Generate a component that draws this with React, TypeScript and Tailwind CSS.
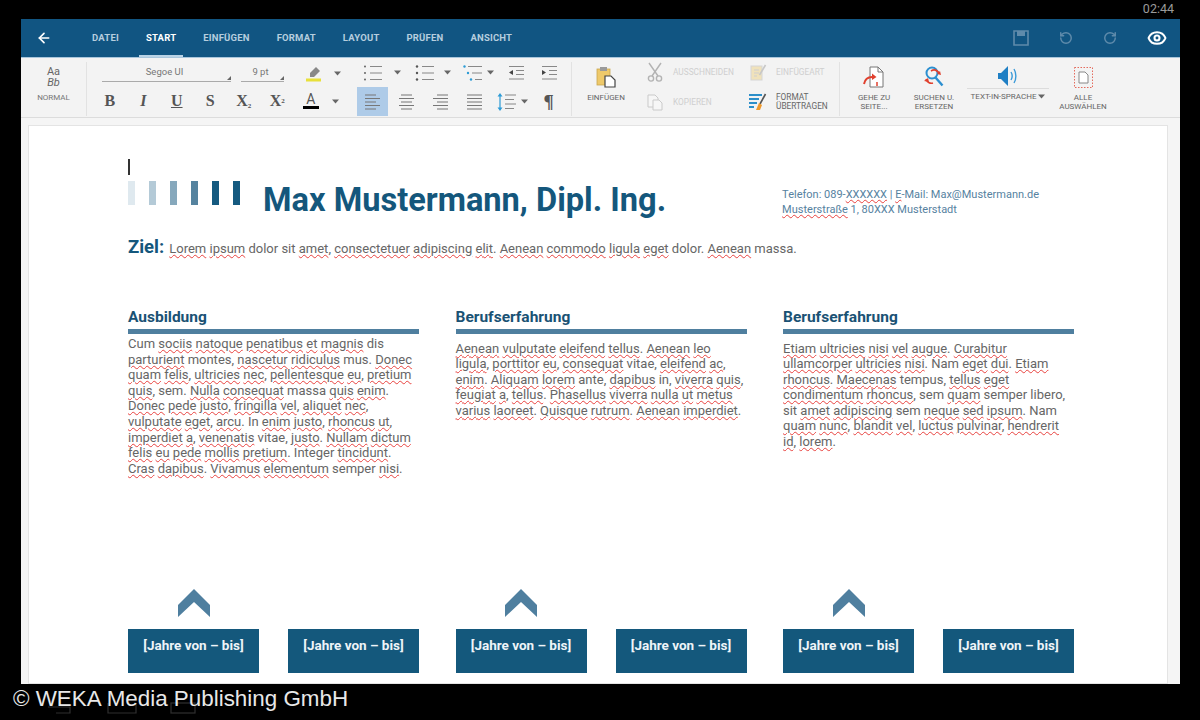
import { ArrowLeft, Eye, RotateCcw, RotateCw } from "lucide-react";
import type { ReactNode } from "react";

// words in {braces} get the red squiggle
function Spell({ text }: { text: string }) {
  const parts = text.split(/(\{[^}]+\})/);
  return (
    <>
      {parts.map((p, i) =>
        p.startsWith("{") ? (
          <span key={i} className="underline decoration-[#e8423f] decoration-wavy decoration-1 underline-offset-[1px]">
            {p.slice(1, -1)}
          </span>
        ) : (
          <span key={i}>{p}</span>
        ),
      )}
    </>
  );
}

function Caret() {
  return (
    <svg width="7" height="5" viewBox="0 0 7 5" className="shrink-0">
      <path d="M0 0.5h7L3.5 4.5z" fill="#666" />
    </svg>
  );
}

function Corner() {
  return (
    <svg width="4" height="4" viewBox="0 0 4 4" className="shrink-0">
      <path d="M4 0v4H0z" fill="#666" />
    </svg>
  );
}

function ListIcon({ kind }: { kind: "num" | "bullet" | "multi" }) {
  const c = kind === "multi" ? "#2d9bd6" : "#555";
  return (
    <svg width="20" height="18" viewBox="0 0 20 18">
      <circle cx={kind === "multi" ? 1.5 : 2} cy="2.5" r={kind === "num" ? 0.9 : 1.2} fill={c} />
      <circle cx={kind === "multi" ? 5 : 2} cy="9" r={kind === "num" ? 0.9 : 1.2} fill={c} />
      <circle cx={kind === "multi" ? 8 : 2} cy="15.5" r={kind === "num" ? 0.9 : 1.2} fill={c} />
      <path d={kind === "multi" ? "M5 2.5h14M9 9h10M12 15.5h7" : "M7 2.5h12M7 9h12M7 15.5h12"} stroke="#888" strokeWidth="1.2" />
    </svg>
  );
}

function LineSpacingIcon() {
  return (
    <svg width="20" height="18" viewBox="0 0 20 18">
      <path d="M3 0l2.5 3.5h-5zM3 18l2.5-3.5h-5z" fill="#2d9bd6" />
      <path d="M3 3v12" stroke="#2d9bd6" strokeWidth="1.2" />
      <path d="M8 2h11M8 6.5h9M8 11h11M8 15.5h9" stroke="#888" strokeWidth="1.2" />
    </svg>
  );
}

function IndentIcon({ right }: { right?: boolean }) {
  return (
    <svg width="17" height="16" viewBox="0 0 17 16">
      <path d="M1 1.5h15M8 5.5h8M8 9.5h8M1 14h15" stroke="#888" strokeWidth="1.2" />
      <path d={right ? "M1 5l4 2.5L1 10z" : "M5 5L1 7.5 5 10z"} fill="#444" />
    </svg>
  );
}

function AlignIcon({ kind }: { kind: "left" | "center" | "right" | "justify" }) {
  const d = {
    left: "M0 1h11M0 4.5h15M0 8h11M0 11.5h15M0 15h11",
    center: "M2 1h11M0 4.5h15M2 8h11M0 11.5h15M2 15h11",
    right: "M4 1h11M0 4.5h15M4 8h11M0 11.5h15M4 15h11",
    justify: "M0 1h15M0 4.5h15M0 8h15M0 11.5h15M0 15h15",
  }[kind];
  return (
    <svg width="15" height="16" viewBox="0 0 15 16">
      <path d={d} stroke="#777" strokeWidth="1.2" />
    </svg>
  );
}

function FormatLetter({ children, className }: { children: ReactNode; className?: string }) {
  return (
    <span className={`flex w-[33.5px] shrink-0 justify-center text-[16px] leading-none font-bold text-[#555] [font-family:'Liberation_Serif',serif] ${className ?? ""}`}>
      <span>{children}</span>
    </span>
  );
}

function ClipboardIcon() {
  return (
    <svg width="20" height="22" viewBox="0 0 20 22">
      <rect x="1" y="3" width="13" height="16" fill="#eec96a" stroke="#c8a64f" strokeWidth="0.8" />
      <rect x="4" y="1" width="7" height="4" fill="#9a9a9a" />
      <path d="M9 10h6l4 4v7H9z" fill="#fff" stroke="#444" strokeWidth="1.2" />
    </svg>
  );
}

function ScissorsIcon() {
  return (
    <svg width="16" height="20" viewBox="0 0 16 20" className="opacity-40">
      <path d="M2 1l9 13M14 1L5 14" stroke="#555" strokeWidth="1.4" fill="none" />
      <circle cx="4" cy="16.5" r="2.6" stroke="#555" strokeWidth="1.4" fill="none" />
      <circle cx="12" cy="16.5" r="2.6" stroke="#555" strokeWidth="1.4" fill="none" />
    </svg>
  );
}

function CopyIcon() {
  return (
    <svg width="16" height="17" viewBox="0 0 16 17" className="opacity-25">
      <path d="M1 1h7l3 3v9H1z" fill="#fff" stroke="#555" />
      <path d="M6 6h6l3 3v7H6z" fill="#fff" stroke="#555" />
    </svg>
  );
}

function PasteSpecialIcon() {
  return (
    <svg width="17" height="18" viewBox="0 0 17 18" className="opacity-40">
      <rect x="1" y="3" width="11" height="14" fill="#eec96a" stroke="#aaa" />
      <path d="M4 7h5M4 10h5M4 13h3" stroke="#999" />
      <path d="M15.5 2l-6 10" stroke="#888" strokeWidth="1.6" />
    </svg>
  );
}

function BrushIcon() {
  return (
    <svg width="18" height="18" viewBox="0 0 18 18">
      <path d="M0 2h13M0 6h10M0 10h8M0 14h5" stroke="#2d8fc9" strokeWidth="2" />
      <path d="M16.5 1L11 11" stroke="#555" strokeWidth="1.6" />
      <path d="M10 10l3 2-2 5-4 0z" fill="#ef9a2e" />
    </svg>
  );
}

function GotoIcon() {
  return (
    <svg width="22" height="22" viewBox="0 0 22 22">
      <path d="M7 1h8l5 5v15H7z" fill="#fff" stroke="#777" strokeWidth="1" />
      <path d="M15 1v5h5" fill="none" stroke="#777" />
      <path d="M1 18c1-5 4-7 8-7" stroke="#e0402e" strokeWidth="2" fill="none" />
      <path d="M9 7.5l4.5 3.5L9 14z" fill="#e0402e" />
      <path d="M14 16v4" stroke="#e0402e" strokeWidth="1.5" />
    </svg>
  );
}

function FindIcon() {
  return (
    <svg width="20" height="22" viewBox="0 0 20 22">
      <circle cx="8" cy="7" r="5.5" stroke="#2b8fd0" strokeWidth="2" fill="none" />
      <path d="M11.5 11.5l7 8" stroke="#2b8fd0" strokeWidth="2.4" />
      <path d="M7 5c3-2 6-1 8 2" stroke="#e0402e" strokeWidth="1.6" fill="none" />
      <path d="M17 9l-4-1 3-3z" fill="#e0402e" />
      <path d="M2 13c1 3 4 5 7 4" stroke="#e0402e" strokeWidth="1.6" fill="none" />
      <path d="M0 15l4-3 1 4z" fill="#e0402e" />
    </svg>
  );
}

function SpeakerIcon() {
  return (
    <svg width="22" height="22" viewBox="0 0 22 22">
      <path d="M1 8h3l7-7v20l-7-7H1z" fill="#1f7fc4" />
      <path d="M14 7c1.5 2.5 1.5 5.5 0 8M17 4c2.5 4 2.5 10 0 14" stroke="#3a9ad8" strokeWidth="1.4" fill="none" />
    </svg>
  );
}

function SelectAllIcon() {
  return (
    <svg width="19" height="21" viewBox="0 0 19 21">
      <rect x="0.5" y="0.5" width="18" height="20" fill="none" stroke="#e25b4c" strokeWidth="0.9" strokeDasharray="1.5 1.5" />
      <path d="M5 5h6l3 3v8H5z" fill="#fff" stroke="#888" />
    </svg>
  );
}

function Tab({ label, active }: { label: string; active?: boolean }) {
  return (
    <div className={`flex h-[38px] items-center border-b-2 px-[7px] pt-[3px] text-[9.5px] font-bold tracking-[0.2px] ${active ? "border-[#b9d3e6] text-white" : "border-transparent text-[#b6cedf]"}`}>
      {label}
    </div>
  );
}

function BigButton({ icon, lines, width }: { icon: ReactNode; lines: string[]; width: string }) {
  return (
    <div className={`flex flex-col items-center ${width}`}>
      <div className="flex h-[28px] items-center">{icon}</div>
      <div className="mt-[2px] text-center text-[8px] leading-[9px] text-[#666]">
        {lines.map((l) => (
          <div key={l}>{l}</div>
        ))}
      </div>
    </div>
  );
}

function SmallAction({ icon, lines, faded }: { icon: ReactNode; lines: string[]; faded?: boolean }) {
  return (
    <div className="flex h-[22px] items-center gap-[9px]">
      <div className="flex w-[18px] justify-center">{icon}</div>
      <div className={`text-[8.3px] leading-[9px] ${faded ? "text-[#cfcfcf]" : "text-[#666]"}`}>
        {lines.map((l) => (
          <div key={l}>{l}</div>
        ))}
      </div>
    </div>
  );
}

function Divider() {
  return <div className="h-[54px] w-px shrink-0 bg-[#e2e2e2]" />;
}

function Ribbon() {
  return (
    <div className="flex h-[60px] shrink-0 items-start border-b border-[#dcdcdc] bg-[#f3f3f3] pt-[4px]">
      <div className="flex w-[65px] shrink-0 flex-col items-center pt-[4px] text-[#666]">
        <div className="text-[11px] leading-[11px]">Aa</div>
        <div className="text-[11px] leading-[11px] italic">Bb</div>
        <div className="mt-[5px] text-[8px] leading-[10px] text-[#777]">NORMAL</div>
      </div>
      <Divider />
      <div className="flex w-[270px] shrink-0 flex-col gap-[10px] pl-[6px] pt-[2px]">
        <div className="flex h-[19px] items-center">
          <div className="ml-[9px] flex w-[129px] items-end border-b border-[#aaa] pb-[1px] text-[9.5px] text-[#777]">
            <span className="flex-1 text-center">Segoe UI</span>
            <Corner />
          </div>
          <div className="ml-[10px] flex w-[43px] items-end border-b border-[#aaa] pb-[1px] text-[9.5px] text-[#777]">
            <span className="flex-1 text-center">9 pt</span>
            <Corner />
          </div>
          <svg width="16" height="16" viewBox="0 0 16 16" className="ml-[21px]">
            <path d="M11 1l4 4-6 6H5V7z" fill="#888" />
            <rect x="1" y="12.5" width="15" height="3" fill="#e8e03a" />
          </svg>
          <div className="ml-[13px]">
            <Caret />
          </div>
        </div>
        <div className="flex items-center">
          <FormatLetter>B</FormatLetter>
          <FormatLetter className="italic">I</FormatLetter>
          <FormatLetter className="underline">U</FormatLetter>
          <FormatLetter>S</FormatLetter>
          <FormatLetter>
            X<sub className="text-[7px]">2</sub>
          </FormatLetter>
          <FormatLetter>
            X<sup className="text-[7px]">2</sup>
          </FormatLetter>
          <div className="flex w-[33.5px] shrink-0 flex-col items-center">
            <span className="text-[14px] leading-[13px] text-[#555]">A</span>
            <span className="h-[3px] w-[16px] bg-black" />
          </div>
          <div className="ml-[4px]">
            <Caret />
          </div>
        </div>
      </div>
      <div className="flex w-[214px] shrink-0 flex-col gap-[4px]">
        <div className="flex h-[21px] items-center">
          <div className="ml-[6px]"><ListIcon kind="num" /></div>
          <div className="ml-[10.5px]"><Caret /></div>
          <div className="ml-[14.5px]"><ListIcon kind="bullet" /></div>
          <div className="ml-[8.5px]"><Caret /></div>
          <div className="ml-[12.5px]"><ListIcon kind="multi" /></div>
          <div className="ml-[3.5px]"><Caret /></div>
          <div className="ml-[14.5px]"><IndentIcon /></div>
          <div className="ml-[16px]"><IndentIcon right /></div>
        </div>
        <div className="flex h-[29px] items-center">
          <div className="flex h-[29px] w-[31px] items-center justify-center bg-[#aecbe8]"><AlignIcon kind="left" /></div>
          <div className="ml-[11px]"><AlignIcon kind="center" /></div>
          <div className="ml-[18.5px]"><AlignIcon kind="right" /></div>
          <div className="ml-[19px]"><AlignIcon kind="justify" /></div>
          <div className="ml-[15.5px]"><LineSpacingIcon /></div>
          <div className="ml-[3.5px]"><Caret /></div>
          <span className="ml-[16px] text-[19px] leading-none font-bold text-[#555] [font-family:'Liberation_Serif',serif]">¶</span>
        </div>
      </div>
      <Divider />
      <div className="mt-[1px] flex w-[267px] shrink-0">
        <BigButton icon={<ClipboardIcon />} lines={["EINFÜGEN"]} width="w-[68px]" />
        <div className="-mt-[2px] ml-[6px] flex w-[103px] flex-col gap-[8px]">
          <SmallAction icon={<ScissorsIcon />} lines={["AUSSCHNEIDEN"]} faded />
          <SmallAction icon={<CopyIcon />} lines={["KOPIEREN"]} faded />
        </div>
        <div className="-mt-[2px] flex flex-col gap-[8px]">
          <SmallAction icon={<PasteSpecialIcon />} lines={["EINFÜGEART"]} faded />
          <SmallAction icon={<BrushIcon />} lines={["FORMAT", "ÜBERTRAGEN"]} />
        </div>
      </div>
      <Divider />
      <div className="mt-[1px] flex pl-[4px]">
        <BigButton icon={<GotoIcon />} lines={["GEHE ZU", "SEITE..."]} width="w-[60px]" />
        <BigButton icon={<FindIcon />} lines={["SUCHEN U.", "ERSETZEN"]} width="w-[60px]" />
        <div className="ml-[3px] flex w-[82px] flex-col items-center">
          <div className="flex h-[26px] w-full items-center justify-center border-b border-[#dcdcdc]"><SpeakerIcon /></div>
          <div className="mt-[3px] flex items-center gap-[2px] text-[8px] leading-[9px] whitespace-nowrap text-[#666]">
            TEXT-IN-SPRACHE <Caret />
          </div>
        </div>
        <BigButton icon={<SelectAllIcon />} lines={["ALLE", "AUSWÄHLEN"]} width="ml-[4px] w-[60px]" />
      </div>
    </div>
  );
}

function Column({ title, body, bodyClass }: { title: string; body: string; bodyClass: string }) {
  return (
    <div className="w-[291px]">
      <h2 className="text-[15.5px] leading-[20px] font-bold text-[#1a5274]">{title}</h2>
      <div className="mt-[2px] h-[5px] w-full bg-[#4f7f9f]" />
      <p className={`text-[13px] text-[#666] ${bodyClass}`}>
        <Spell text={body} />
      </p>
    </div>
  );
}

function YearBox() {
  return (
    <div className="h-[44px] w-[131px] bg-[#14587c] pt-[6px] text-center text-[13.5px] font-bold text-[#eef4f8]">
      [Jahre von – bis]
    </div>
  );
}

function Timeline() {
  return (
    <div className="w-[291px]">
      <div className="flex justify-center pr-[160px]">
        <svg width="32" height="30" viewBox="0 0 32 30">
          <path d="M16 1L32 17v12L16 14 0 29V17z" fill="#4f7f9f" />
        </svg>
      </div>
      <div className="mt-[11px] flex justify-between">
        <YearBox />
        <YearBox />
      </div>
    </div>
  );
}

const barColors = ["bg-[#dfe9ef]", "bg-[#b4cad7]", "bg-[#86a8bc]", "bg-[#55839f]", "bg-[#155a80]", "bg-[#155a80]"];

export default function App() {
  return (
    <div className="flex h-[720px] w-[1200px] flex-col overflow-hidden bg-black [font-family:Roboto,sans-serif]">
      <div className="flex h-[19px] shrink-0 items-center justify-end pr-[26px] text-[12.5px] text-[#9a9a9a]">02:44</div>
      <div className="ml-[21px] flex h-[665px] w-[1159px] flex-col overflow-hidden bg-[#f5f5f5]">
        <div className="flex h-[39px] shrink-0 items-center border-b border-[#a9c6dc] bg-[#115582]">
          <ArrowLeft size={16} strokeWidth={2.5} className="ml-[15px] text-white" />
          <div className="ml-[33px] flex items-center gap-[13px]">
            <Tab label="DATEI" />
            <Tab label="START" active />
            <Tab label="EINFÜGEN" />
            <Tab label="FORMAT" />
            <Tab label="LAYOUT" />
            <Tab label="PRÜFEN" />
            <Tab label="ANSICHT" />
          </div>
          <div className="ml-auto flex items-center gap-[30px] pr-[13px]">
            <svg width="16" height="16" viewBox="0 0 16 16">
              <path d="M1 1h14v14H1z" fill="none" stroke="#5f8bab" strokeWidth="1.6" />
              <path d="M4 1h8v5H4z" fill="#5f8bab" />
            </svg>
            <RotateCcw size={14} strokeWidth={2.5} className="text-[#5f8bab]" />
            <RotateCw size={14} strokeWidth={2.5} className="text-[#5f8bab]" />
            <Eye size={20} strokeWidth={2.5} className="text-white" />
          </div>
        </div>
        <Ribbon />
        <div className="mt-[7px] mr-[12px] ml-[7px] flex-1 overflow-hidden border border-[#e4e4e4] bg-white pt-[33px] pl-[99px]">
          <div className="h-[16px] w-[2px] bg-[#333]" />
          <div className="flex items-start">
            <div className="mt-[6px] flex gap-[14px]">
              {barColors.map((b, i) => (
                <div key={i} className={`h-[24px] w-[7px] ${b}`} />
              ))}
            </div>
            <h1 className="mt-[6px] ml-[23px] text-[32.6px] leading-[38px] font-bold whitespace-nowrap text-[#14577c]">Max Mustermann, Dipl. Ing.</h1>
            <div className="mt-[12px] ml-[116px] text-[11px] leading-[15px] whitespace-nowrap text-[#56829f]">
              <div>
                <Spell text="Telefon: 089-{XXXXXX} | {E}-Mail: Max@Mustermann.de" />
              </div>
              <div>
                <Spell text="{Musterstraße} 1, 80XXX Musterstadt" />
              </div>
            </div>
          </div>
          <div className="mt-[15px] flex items-baseline gap-[5px]">
            <span className="text-[18.5px] leading-[26px] font-bold text-[#14577c]">Ziel:</span>
            <span className="text-[13px] text-[#666]">
              <Spell text="{Lorem} {ipsum} dolor sit {amet}, {consectetuer} {adipiscing} {elit}. {Aenean} {commodo} {ligula} {eget} dolor. {Aenean} massa." />
            </span>
          </div>
          <div className="mt-[47px] flex h-[281px] gap-[36.5px]">
            <Column
              title="Ausbildung"
              bodyClass="mt-[2px] leading-[15.6px]"
              body="Cum {sociis} {natoque} {penatibus} {et} {magnis} dis {parturient} montes, {nascetur} {ridiculus} mus. {Donec} {quam} {felis}, {ultricies} {nec}, {pellentesque} {eu}, {pretium} {quis}, sem. {Nulla} {consequat} massa {quis} {enim}. {Donec} {pede} {justo}, {fringilla} {vel}, {aliquet} {nec}, {vulputate} {eget}, {arcu}. In {enim} {justo}, {rhoncus} {ut}, {imperdiet} {a}, {venenatis} vitae, {justo}. {Nullam} {dictum} {felis} {eu} {pede} {mollis} {pretium}. Integer {tincidunt}. {Cras} {dapibus}. {Vivamus} {elementum} semper {nisi}."
            />
            <Column
              title="Berufserfahrung"
              bodyClass="mt-[6.5px] leading-[15.5px]"
              body="{Aenean} {vulputate} {eleifend} {tellus}. {Aenean} {leo} {ligula}, {porttitor} {eu}, {consequat} vitae, {eleifend} {ac}, {enim}. {Aliquam} {lorem} ante, {dapibus} in, {viverra} {quis}, {feugiat} {a}, {tellus}. {Phasellus} {viverra} {nulla} {ut} {metus} {varius} {laoreet}. {Quisque} {rutrum}. {Aenean} {imperdiet}."
            />
            <Column
              title="Berufserfahrung"
              bodyClass="mt-[6.5px] leading-[15.5px]"
              body="{Etiam} {ultricies} {nisi} {vel} {augue}. {Curabitur} {ullamcorper} {ultricies} {nisi}. Nam {eget} {dui}. {Etiam} {rhoncus}. {Maecenas} tempus, {tellus} {eget} {condimentum} {rhoncus}, sem {quam} semper libero, sit {amet} {adipiscing} sem {neque} {sed} {ipsum}. Nam {quam} {nunc}, {blandit} {vel}, {luctus} {pulvinar}, {hendrerit} {id}, {lorem}."
            />
          </div>
          <div className="flex gap-[36.5px]">
            <Timeline />
            <Timeline />
            <Timeline />
          </div>
        </div>
      </div>
      <div className="relative flex-1">
        {/* dim system nav buttons under the watermark */}
        <div className="flex items-center gap-[33px] pt-[18px] pl-[46px] opacity-40">
          <svg width="28" height="12" viewBox="0 0 28 12">
            <path d="M2 5h22v6H10" fill="none" stroke="#777" strokeWidth="1.2" />
          </svg>
          <svg width="30" height="12" viewBox="0 0 30 12">
            <path d="M1 1v10h28V1" fill="none" stroke="#777" strokeWidth="1.2" />
          </svg>
          <svg width="26" height="12" viewBox="0 0 26 12">
            <rect x="1" y="1" width="24" height="10" fill="none" stroke="#777" strokeWidth="1.2" />
          </svg>
        </div>
        <div className="absolute top-[1px] left-[13px] text-[22.4px] leading-[28px] text-[#e8e8e8] [font-family:'Liberation_Sans',sans-serif]">
          © WEKA Media Publishing GmbH
        </div>
      </div>
    </div>
  );
}
